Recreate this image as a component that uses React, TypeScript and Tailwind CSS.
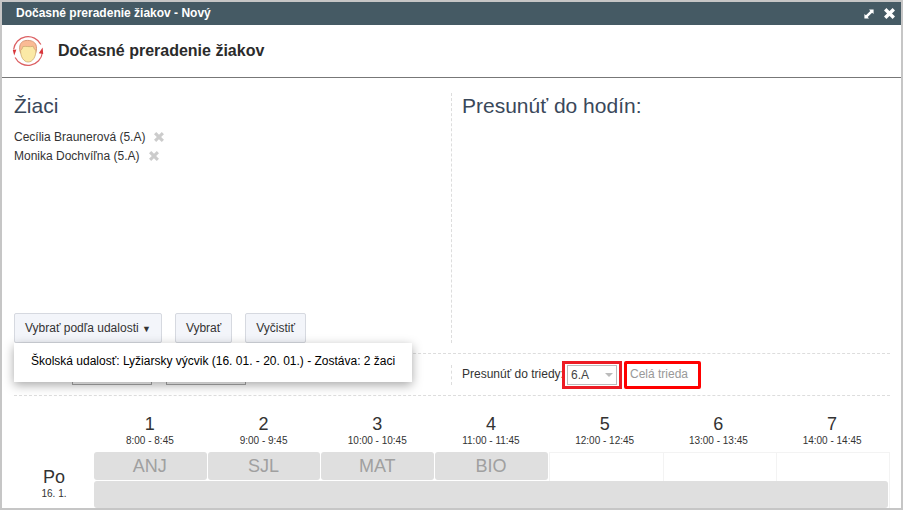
import React from "react";
import { clsx } from "clsx";

interface Lesson {
  id: number;
  time: string;
  subject?: string;
}

const STUDENTS = ["Cecília Braunerová (5.A)", "Monika Dochvíľna (5.A)"];

const LESSONS: Lesson[] = [
  { id: 1, time: "8:00 - 8:45", subject: "ANJ" },
  { id: 2, time: "9:00 - 9:45", subject: "SJL" },
  { id: 3, time: "10:00 - 10:45", subject: "MAT" },
  { id: 4, time: "11:00 - 11:45", subject: "BIO" },
  { id: 5, time: "12:00 - 12:45" },
  { id: 6, time: "13:00 - 13:45" },
  { id: 7, time: "14:00 - 14:45" },
];

const CrossIcon = ({ className }: { className?: string }) => (
  <svg viewBox="0 0 10 10" className={className} aria-hidden="true">
    <path d="M2.2 2.2L7.8 7.8M7.8 2.2L2.2 7.8" stroke="currentColor" strokeWidth="3.1" strokeLinecap="square" />
  </svg>
);

const ExpandIcon = () => (
  <svg viewBox="0 0 10 10" className="size-[10px]" fill="currentColor" aria-hidden="true">
    <path d="M5 .4H9.6V5L8.1 3.7L3.7 8.1L5 9.6H.4V5L1.9 6.3L6.3 1.9Z" />
  </svg>
);

const TransferIcon = () => (
  <svg viewBox="0 0 32 32" className="size-8" fill="none" aria-hidden="true">
    <path
      d="M1.6 14.5A14.5 14.5 0 0 1 28.9 9.5M30.4 17.5A14.5 14.5 0 0 1 3.1 22.5"
      stroke="#dc5f62"
      strokeWidth="1.2"
    />
    <path d="M.8 15L4.4 14.6L2.2 20.4Z" fill="#d8363b" />
    <path d="M31.2 19L26.8 18.2L30.6 12.6Z" fill="#d8363b" />
    <path
      d="M8.6 18C7.6 16 7.4 13.4 7.8 11C8.6 7.4 11 5.4 15.6 5.4C20.6 5.4 23.8 7.6 24.4 11.4C24.7 14 24.4 16.4 23.6 18Z"
      fill="#fabb95"
      stroke="#cf8866"
      strokeWidth=".8"
    />
    <path
      d="M8.6 15.4C9.6 14.8 10.6 13.4 10.8 11.6C13.6 10.8 18 12.4 21.2 11.2C21.6 13 22.6 14.6 23.9 15.4C24 21.6 20.8 27 16.2 27C11.6 27 8.4 21.6 8.6 15.4Z"
      fill="#fbe9a6"
      stroke="#cdaa72"
      strokeWidth=".8"
    />
  </svg>
);

const ActionButton = ({ children }: { children: React.ReactNode }) => (
  <button className="h-[30px] rounded-xs border border-[#d6d9e0] bg-[#f3f5fa] px-[10px] text-[#333]">
    {children}
  </button>
);

const Timetable = () => (
  <table className="mt-[18px] w-full table-fixed border-separate border-spacing-0 text-center text-[#333]">
    <thead>
      <tr>
        <th className="w-20 p-0" />
        {LESSONS.map((lesson) => (
          <th key={lesson.id} className="p-0 pr-[2px] pb-[5px] font-normal">
            <div className="text-lg leading-5">{lesson.id}</div>
            <div className="text-[10px] leading-[13px]">{lesson.time}</div>
          </th>
        ))}
      </tr>
    </thead>
    <tbody>
      <tr>
        <th rowSpan={2} className="p-0 font-normal">
          <div className="mt-[6px] text-lg leading-5">Po</div>
          <div className="text-[10px] leading-[13px]">16. 1.</div>
        </th>
        {LESSONS.map((lesson) => (
          <td
            key={lesson.id}
            className={clsx(
              "h-[29px] p-0 align-top",
              !lesson.subject && "border-t border-l border-[#f3f3f3] last:border-r"
            )}
          >
            {lesson.subject && (
              <div className="mr-px h-7 rounded-[3px] bg-[#dfdfdf] pr-px text-lg leading-7 text-[#a0a0a0]">
                {lesson.subject}
              </div>
            )}
          </td>
        ))}
      </tr>
      <tr>
        <td colSpan={7} className="border-r border-[#f3f3f3] p-0 align-top">
          <div className="mr-px h-[27px] rounded-[3px] bg-[#dfdfdf]" />
        </td>
      </tr>
    </tbody>
  </table>
);

export default function App() {
  return (
    <div className="min-h-screen border-2 border-[#c6c6c6] bg-white font-['Liberation_Sans',Arial,sans-serif] text-xs text-[#333]">
      {/* Title bar */}
      <div className="flex h-[23px] items-center justify-between bg-[#455a64] pr-[6px] pl-[14px] font-bold text-white">
        <span className="pb-[2px]">Dočasné preradenie žiakov - Nový</span>
        <div className="flex items-center gap-[10px]">
          <button aria-label="Zväčšiť">
            <ExpandIcon />
          </button>
          <button aria-label="Zavrieť">
            <CrossIcon className="size-[11px]" />
          </button>
        </div>
      </div>

      <header className="flex h-[53px] items-center gap-[14px] border-b border-[#777] pl-[10px]">
        <TransferIcon />
        <h1 className="text-base font-bold text-[#2b2b2b]">Dočasné preradenie žiakov</h1>
      </header>

      <main className="pt-[15px] pr-[11px] pl-3">
        <div className="grid grid-cols-2">
          {/* Students */}
          <section className="flex min-h-[250px] flex-col border-r border-dashed border-[#ddd]">
            <h2 className="text-[21px] leading-[26px] text-[#3a485a]">Žiaci</h2>
            <ul className="mt-2">
              {STUDENTS.map((student) => (
                <li key={student} className="flex h-[19px] items-center gap-[9px]">
                  {student}
                  <button aria-label="Odstrániť" className="text-[#ccc]">
                    <CrossIcon className="size-[10px]" />
                  </button>
                </li>
              ))}
            </ul>
            <div className="relative mt-auto flex gap-[13px]">
              <ActionButton>
                Vybrať podľa udalosti <span className="text-[9px]">▼</span>
              </ActionButton>
              <ActionButton>Vybrať</ActionButton>
              <ActionButton>Vyčistiť</ActionButton>
              <div className="absolute top-full left-0 z-10 bg-white px-[17px] pt-2 pb-[10px] leading-[21px] whitespace-nowrap text-black shadow-[0_3px_10px_rgba(0,0,0,0.35)]">
                <button>Školská udalosť: Lyžiarsky výcvik (16. 01. - 20. 01.) - Zostáva: 2 žaci</button>
              </div>
            </div>
          </section>

          <section className="pl-[10px]">
            <h2 className="text-[21px] leading-[26px] text-[#3a485a]">Presunúť do hodín:</h2>
          </section>
        </div>

        {/* Date range and target class */}
        <div className="mt-[10px] grid h-[43px] grid-cols-2 items-center border-y border-dashed border-[#ddd]">
          <div className="flex h-5 gap-[14px] border-r border-dashed border-[#ddd] pl-[58px]">
            <input aria-label="Od" className="w-20 border border-[#aaa]" />
            <input aria-label="Do" className="w-20 border border-[#aaa]" />
          </div>
          <div className="flex items-center pl-[10px]">
            <label htmlFor="target-class" className="w-[100px] pb-[2px] whitespace-nowrap">
              Presunúť do triedy:
            </label>
            <div className="relative flex h-7 w-[60px] items-center border-3 border-[#ed1c24] px-[2px]">
              <select
                id="target-class"
                defaultValue="6.A"
                className="h-5 w-full appearance-none border border-[#bbb] pl-[3px] text-[#444]"
              >
                <option>6.A</option>
              </select>
              <svg viewBox="0 0 8 4" className="pointer-events-none absolute right-[6px] h-1 w-2 text-[#bbb]">
                <path d="M0 0H8L4 4Z" fill="currentColor" />
              </svg>
            </div>
            <button className="ml-[2px] h-7 w-[77px] rounded-xs border-3 border-[#f00] pb-[2px] pl-[3px] text-left text-[#999]">
              Celá trieda
            </button>
          </div>
        </div>

        <Timetable />
      </main>
    </div>
  );
}
